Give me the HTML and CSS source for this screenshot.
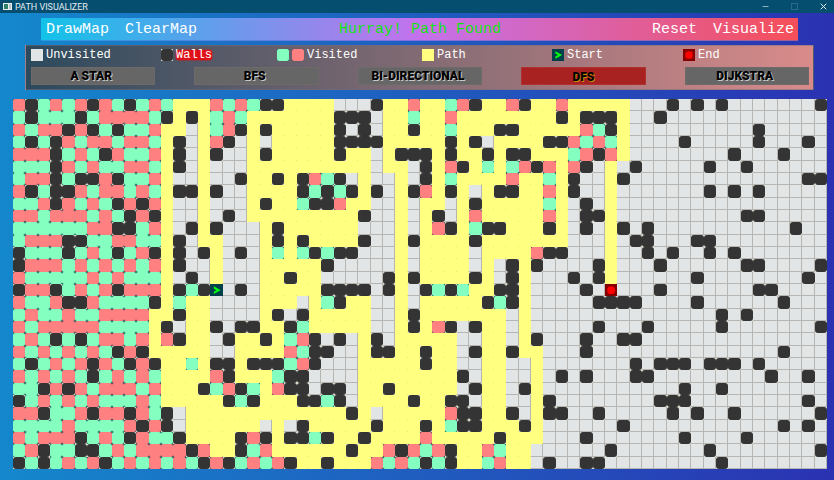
FILE: index.html
```html
<!DOCTYPE html>
<html lang="en">
<head>
<meta charset="utf-8">
<title>PATH VISUALIZER</title>
<link rel="stylesheet" href="styles.css">
</head>
<body>
<header class="titlebar">
  <svg class="app-icon" viewBox="0 0 9 7" aria-hidden="true"><rect width="9" height="7" fill="#e8eef0"/><rect x="1" y="1" width="4" height="5" fill="#2f7f6c"/><rect x="6" y="1" width="2" height="5" fill="#b9c4c8"/></svg>
  <h1 class="title">PATH VISUALIZER</h1>
  <div class="window-controls">
    <button type="button" aria-label="Minimize"><svg viewBox="0 0 7 7"><path d="M0.5 3.5h6" stroke="#8fb0c0"/></svg></button>
    <button type="button" aria-label="Maximize" disabled><svg viewBox="0 0 7 7"><rect x="0.5" y="0.5" width="6" height="6" stroke="#2b6a88"/></svg></button>
    <button type="button" aria-label="Close"><svg viewBox="0 0 7 7"><path d="M0.7 0.7l5.6 5.6M6.3 0.7L0.7 6.3" stroke="#e6eef2"/></svg></button>
  </div>
</header>
<main class="app">
  <nav class="menu">
    <div class="menu-group">
      <button type="button">DrawMap</button>
      <button type="button">ClearMap</button>
    </div>
    <output class="status">Hurray! Path Found</output>
    <div class="menu-group menu-group-end">
      <button type="button">Reset</button>
      <button type="button">Visualize</button>
    </div>
  </nav>
  <section class="panel">
    <ul class="legend">
      <li><span class="swatch empty"></span>Unvisited</li>
      <li><span class="swatch wall"></span><span class="selected">Walls</span></li>
      <li><span class="swatch green"></span><span class="swatch red"></span>Visited</li>
      <li><span class="swatch path"></span>Path</li>
      <li><span class="swatch start"></span>Start</li>
      <li><span class="swatch end"></span>End</li>
    </ul>
    <div class="algorithms">
      <button type="button">A STAR</button>
      <button type="button">BFS</button>
      <button type="button">BI-DIRECTIONAL</button>
      <button type="button" class="active" aria-pressed="true">DFS</button>
      <button type="button">DIJKSTRA</button>
    </div>
  </section>
  <div class="map" id="map"></div>
</main>
<script src="map.js"></script>
</body>
</html>
```
FILE: styles.css
```css
* { box-sizing: border-box; }

body {
  margin: 0;
  min-height: 100vh;
  background: linear-gradient(to right, #1488cc, #2b32b2);
  font-family: "Courier New", "Liberation Mono", monospace;
  color: #fff;
}

button {
  margin: 0;
  padding: 0;
  border: 0;
  background: none;
  color: inherit;
  font: inherit;
}

.titlebar {
  display: flex;
  align-items: center;
  height: 13px;
  padding-left: 3px;
  background: #064e70;
}
.app-icon { width: 9px; height: 7px; }
.title {
  margin: 0 0 0 3px;
  font: 400 9px/12px Roboto, sans-serif;
  color: #e4edf2;
}
.window-controls { display: flex; gap: 8px; margin-left: auto; }
.window-controls button {
  display: flex;
  align-items: center;
  justify-content: center;
  width: 21px;
  height: 12px;
}
.window-controls svg { width: 7px; height: 7px; fill: none; }

.app { padding: 5px 7px 11px 13px; }

.menu {
  display: grid;
  grid-template-columns: 1fr auto 1fr;
  align-items: center;
  height: 23px;
  margin: 0 29px 4px 28px;
  padding: 2px 4px 0 5px;
  border-bottom: 1px solid rgba(70, 110, 210, 0.5);
  background: linear-gradient(to right, #12c2e9, #c471ed, #f64f59);
  font-size: 15px;
  line-height: 20px;
}
.menu-group { display: flex; gap: 16px; }
.menu-group-end { justify-content: flex-end; }
.status { color: #12e212; }

.panel {
  height: 45px;
  margin: 0 13px 9px 12px;
  padding: 2px 4px 0 5px;
  border: 1px solid rgba(110, 110, 130, 0.5);
  background: linear-gradient(to right, #2c4a5d, #d98b8a);
}
.legend {
  display: grid;
  grid-template-columns: 130fr 116fr 145fr 130fr 131fr 126fr;
  margin: 0 0 5px;
  padding: 0;
  list-style: none;
  font-size: 12px;
  line-height: 14px;
}
.legend li { display: flex; align-items: center; gap: 3px; }
.swatch { width: 12px; height: 12px; }
.selected {
  border-radius: 3px;
  background: #e01018;
  box-shadow: 0 0 2px #ff0000;
  line-height: 10px;
}

.algorithms { display: flex; justify-content: space-between; }
.algorithms button {
  width: 16%;
  height: 18px;
  padding-right: 4px;
  border: 1px solid #6e6a6a;
  background: #666;
  font: 900 12px/16px Roboto, sans-serif;
  color: #000;
  text-shadow: 1px 1px 0 #c8c8c8;
}
.algorithms .active {
  padding: 1px 0 0;
  border-color: #b03030;
  background: #a92222;
  text-shadow: 1px 1px 0 #c98a00;
}

.map {
  display: grid;
  grid-template-columns: repeat(66, 1fr);
  grid-template-rows: repeat(30, 1fr);
  aspect-ratio: 66 / 30;
}

.empty { background: #e2e5e6; }
.map .empty { border: solid #b7b5b2; border-width: 0 1px 1px 0; }
.path { background: #ffff80; }
.map .path {
  background: linear-gradient(#e8e878, #e8e878) 100% 100% / 1px 1px no-repeat #ffff80;
}
.wall { background: #e6e8d8; }
.green, .red { background: #1e4a58; }
.wall::before, .green::before, .red::before {
  content: "";
  display: block;
  height: 100%;
  border-radius: 3px;
  background: #343434;
}
.green::before, .red::before { border-radius: 2px; }
.green::before { background: #84ffc0; }
.red::before { background: #ff8080; }
.start { background: #00404a; }
.end { background: #860000; }
.start::before, .end::before { content: ""; display: block; height: 100%; }
.start::before {
  background: #00ff10;
  clip-path: polygon(28% 18%, 84% 50%, 28% 82%, 28% 62%, 50% 50%, 28% 38%);
}
.end::before {
  background: #ff0000;
  clip-path: circle(32%);
}
```
FILE: map.js
```js
// One character per cell: . unvisited, # wall, g/r visited, y path, S start, E end
const rows = [
  "r#grgr#rg#grg" + "yyyrgrg##yyyy...#" + "yyryygr#yyr#yyryyyyy" + "...#.#.#.......#",
  "g#ggg#grrrrg#" + "y#ygrgyyyyyyy###." + "yygyyryyyyyyyy#y###y" + "..#.............",
  "rgrr#r#g#ggry" + "y.ygr#y#yyyyy#.#." + "yy#yygyyy##yyyyyrg#y" + "..........#.....",
  "g#g#rgrrgrrgy" + "#.yr#.y.yyyyy####" + "yyyyy#y#.yyyy##rgrgy" + "....#.....#...#.",
  "rrr#grg#rggry" + "#.y#..y#yyyyy#yy." + "y###y#yy#y##yyygr#ry" + "........#...#...",
  "ggg#rgrggrrgy" + "#.y...yyyyyyyyyy." + "yy.#yr#ygygr#ryr#.y." + "#.....#..#......",
  "grr#g##r#ggry" + "..y..#yy#y#rg#.y." + ".y.#ygyyyyryygy#..y#" + "..............##",
  "r#g##rgrrgrgy" + "##y#..yyyy#g#g#y#" + ".y#ry#y.y##yyry#..y." + "......#.#.#.....",
  "ggr#rgrg#r#ry" + "..y...y#yyg##ryy." + ".y.yy.y#yyyyygy.#.y." + "................",
  "rrgrrrgrg#r#y" + "..y.#.yyyyyyyyy#." + ".y.y#.yryyyyyry.##y." + ".........##.....",
  "ggggggrr##gry" + ".#y#...y#yyyyyy.." + ".y.yr#yg##yyy#y.#.y#" + ".#...........#..",
  "grrr##ggrrggy" + "#.yy...y#y#yyyy#." + ".y#yyyy#yyyyyyy...y." + "##...##.........",
  "#ggg#grg#gr#y" + "#.#y.#.ygyg#g##.." + ".y.yyyy.yyyyr##...y." + ".#.#..#.#.......",
  "#rrrgrgrgrgry" + "#..y...yyyyy#...." + ".y.yyyy.y.#y#....#y." + "..#......##....#",
  "rgggggrgrgggy" + ".#.y...yy#yy....." + "#y#yyyy#y.#y...#.#y." + ".....#........#.",
  "#rr#grgr#rrry" + "#g#S.#.yyyyy####." + "#y.#g#gyy##y....#.E." + "..#.......##....",
  "rggr##rgggg#y" + "gyy....yyy.yg#yy." + ".y.yyyyy#g#y.....###" + "#....#......#...",
  "grggrggrrrryy" + "#yy....y#.#yyyyy." + ".y#yyyyyyy.y........" + ".......#.#......",
  "rgrrrrrggggy#" + ".yy#.##yy#gyyyyy." + ".y#yr#.#yy.y.....#.." + ".#.....#.......#",
  "grg#g#grrgryr" + "#yy.#yy#ygr#.#.y#" + ".yyyyy..yy.y#...#..#" + "#...............",
  "rgrgrgrg#r#yy" + "yyy..yyyyrg##..y#" + "#yy#yy.#yy#yy...#..." + "............#...",
  "g#grgr#rg#r#y" + "ygy##y###gr#...yy" + "yyy#yy..yy..y......." + "#.###.###.#.....",
  "rgrgrg#grgrgy" + "yyyr#yyyg##....yy" + "yyyyyy#.yy..y.#.#..." + "##.........#..#.",
  "gg#r#rgrrrgry" + "yy#gr#gyr##.##.yy" + "#yyyyy.#yy.#y......." + "....#..#........",
  "#grgrgrgggrgy" + "yyyy#g#yyy##g#.yy" + "yy#yy##.yy..y#......" + "..###.........#.",
  "rr#ggr#rr#rg#" + ".yyyyyyyyyyyyy#y." + "yyyyyr##yy#.y##..#.." + "...#.#..#......#",
  "ggggrggggr#r#" + ".yyyyyy.y.#yyyyy#" + "yyy#yg##yyy#y......#" + "............#.#.",
  "rgrrr#grg#rgg" + "#yyyy#r#y##g#yy#y" + "yyyryyyyy#yyy...#..." + "....#....#......",
  "gr#gg##grgrrr" + "r#ryy#gryyyyyy#yy" + "r#rgr#yyrgyy......#." + "......#........#",
  "#g#grgr#grgrg" + "rg#r#grgr#yy#yyyr" + "grg#g#yygryy.#..##.." + ".......#........"
];

const kinds = {
  ".": "empty", "#": "wall", g: "green", r: "red",
  y: "path", S: "start", E: "end"
};

const map = document.getElementById("map");
for (const row of rows) {
  for (const code of row) {
    const cell = document.createElement("div");
    cell.className = kinds[code];
    map.appendChild(cell);
  }
}
```
